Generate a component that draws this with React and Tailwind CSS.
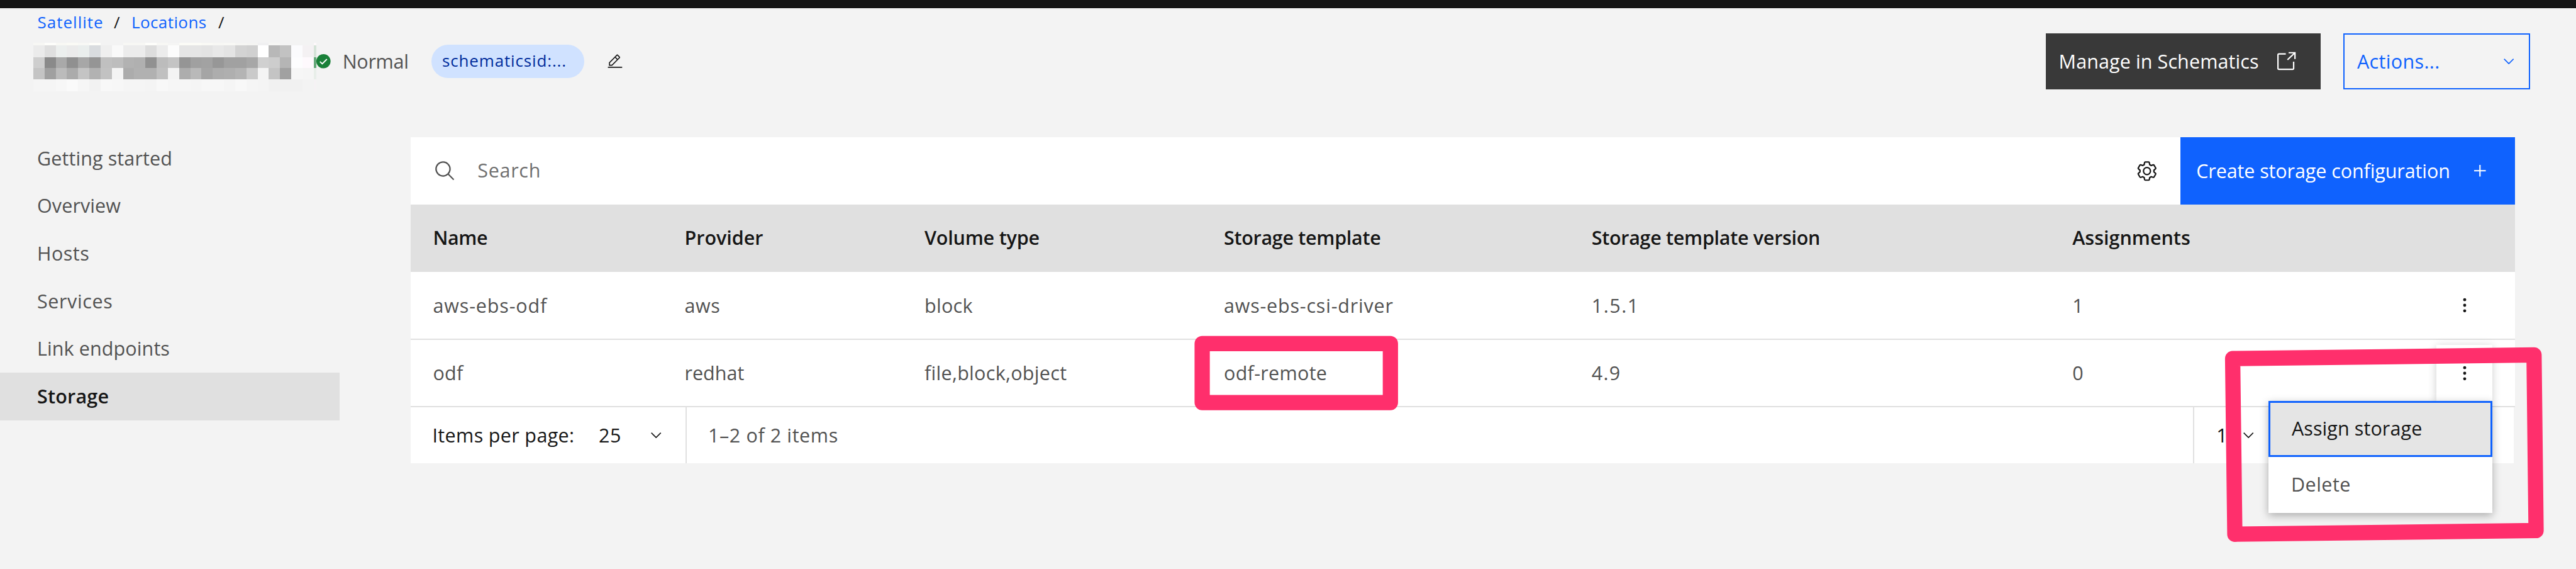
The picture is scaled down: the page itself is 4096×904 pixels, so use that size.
const REDACTED_ROWS = [
  { y: 0, h: 5.3, c: "f7f7f4 fdfdfa f8f8f4 fafaf5 f8f8f5 fdfdf9 f3f3f3 f3f3f3 f7f7f4 f7f7f4 fdfdfa f7f7f4 f5f5f4 fbfbf6 fbfbf6 f9f9f5 f7f7f4 f8f8f5 f5f5f3 f4f4f2 f0f0f1 f6f6f4 f3f3f3 f3f3f3 f3f3f3 fdf8fa" },
  { y: 5.3, h: 22.7, c: "ebebeb dfdfdf ecefee ebebeb eaeeed d9dcdf efefef f9f9f9 ececec ececec dddddd ececec fcfcfc e5e5e5 e5e5e5 e3e3e3 e8e8e8 e4e4e4 d3d3d3 d0d0d0 ffffff b8b8b8 c2c2c2 fbfbfd f4f1f3 d5e3d8" },
  { y: 28, h: 22, c: "cecece 8a8a8a a9a9a9 909090 a7a7a7 959595 c0c0c0 bdbdbd b2b2b2 b0b0b0 919191 bcbcbc c4c4c4 959595 a0a0a0 a2a2a2 979797 a1a1a1 a1a1a1 a7a7a7 d0d0d0 cdcdcd b5b5b5 fdfdfe fef9fd 66a87a" },
  { y: 50, h: 22.3, c: "c4c4c4 a0a0a0 bbbbbb ababab c4c4c4 b2b2b2 c2c2c2 f4f4f4 acacac b1b1b1 b1b1b1 c0c0c0 f3f3f3 adadad b9b9b9 a5a5a5 adadad afafaf b4b4b4 cacaca f4f4f4 c4c4c4 a1a1a1 f6f6f6 f5f5f5 e8eee9" },
  { y: 72.3, h: 22.7, c: "f5f5f5 f5f5f5 f7f7f7 fafafa f6f6f6 f2f2f2 f8f8f8 f7f7f7 f5f5f5 f5f5f5 f4f4f4 f8f8f8 f6f6f6 f6f6f6 f5f5f5 f7f7f7 f7f7f7 f5f5f5 f8f8f8 f5f5f5 f4f4f4 f1f1f1 f1f1f1 f1f1f1 f3f3f3 f5f2f4" },
];

function RedactedName() {
  return (
    <svg className="ml-[53.4px] mt-[15px] h-[76.8px] w-[449.7px] shrink-0 self-start" viewBox="0 0 556 95" preserveAspectRatio="none" shapeRendering="crispEdges">
      {REDACTED_ROWS.map((row) =>
        row.c.split(" ").map((color, i) => (
          <rect key={i} x={i * 22.04} y={row.y} width={i === 25 ? 5 : 22.04} height={row.h} fill={"#" + color} />
        ))
      )}
    </svg>
  );
}

function CheckIcon() {
  return (
    <svg className="size-[22.6px] shrink-0" viewBox="0 0 28 28" fill="none">
      <circle cx="14" cy="14" r="14" fill="#198038" />
      <path d="M7.2 14.8l4.4 4.3 9.2-9.2" stroke="#fff" strokeWidth="2.3" />
    </svg>
  );
}

function EditIcon() {
  return (
    <svg className="ml-[35.6px] size-[25.9px] shrink-0" viewBox="0 0 32 32" fill="#161616">
      <path d="M2 26H30V28H2zM25.4 9c.8-.8.8-2 0-2.8l-3.6-3.6c-.8-.8-2-.8-2.8 0l-15 15V24h6.4L25.4 9zM20.4 4L24 7.6l-3 3L17.4 7 20.4 4zM6 22v-3.6l10-10 3.6 3.6-10 10H6z" />
    </svg>
  );
}

function LaunchIcon() {
  return (
    <svg className="size-[32.4px] shrink-0" viewBox="16 10 40 40" fill="none" stroke="#fff" strokeWidth="2.7">
      <path d="M34 15.7H20.6a2 2 0 0 0-2 2V44a2 2 0 0 0 2 2h26.8a2 2 0 0 0 2-2V31" />
      <path d="M39.5 13.4H52V25.8M52 13.4L37.3 27.3" />
    </svg>
  );
}

function Chevron({ className }) {
  return (
    <svg className={"h-[9.4px] w-[16.4px] shrink-0 " + className} viewBox="0 0 20.2 11.6" fill="none" stroke="currentColor" strokeWidth="2">
      <path d="M.8.8l9.3 9.3L19.4.8" />
    </svg>
  );
}

function SearchIcon() {
  return (
    <svg className="size-[35.6px] shrink-0" viewBox="0 0 32 32" fill="#525252">
      <path d="M29 27.586l-7.552-7.552a11.018 11.018 0 1 0-1.414 1.414L27.586 29ZM4 13a9 9 0 1 1 9 9A9.01 9.01 0 0 1 4 13Z" />
    </svg>
  );
}

function GearIcon() {
  return (
    <svg className="size-[35.6px] shrink-0" viewBox="0 0 32 32" fill="#161616">
      <path d="M27,16.76c0-.25,0-.5,0-.76s0-.51,0-.77l1.92-1.68A2,2,0,0,0,29.3,11L26.94,7a2,2,0,0,0-1.73-1,2,2,0,0,0-.64.1l-2.43.82a11.35,11.35,0,0,0-1.31-.75l-.51-2.52a2,2,0,0,0-2-1.61H13.64a2,2,0,0,0-2,1.61l-.51,2.52a11.48,11.48,0,0,0-1.32.75L7.43,6.06A2,2,0,0,0,6.79,6,2,2,0,0,0,5.06,7L2.7,11a2,2,0,0,0,.41,2.51L5,15.24c0,.25,0,.5,0,.76s0,.51,0,.77L3.11,18.45A2,2,0,0,0,2.7,21L5.06,25a2,2,0,0,0,1.73,1,2,2,0,0,0,.64-.1l2.43-.82a11.35,11.35,0,0,0,1.31.75l.51,2.52a2,2,0,0,0,2,1.61h4.72a2,2,0,0,0,2-1.61l.51-2.52a11.48,11.48,0,0,0,1.32-.75l2.42.82a2,2,0,0,0,.64.1,2,2,0,0,0,1.73-1L29.3,21a2,2,0,0,0-.41-2.51ZM25.21,24l-3.43-1.16a8.86,8.86,0,0,1-2.71,1.57L18.36,28H13.64l-.71-3.55a9.36,9.36,0,0,1-2.7-1.57L6.79,24,4.43,20l2.72-2.4a8.9,8.9,0,0,1,0-3.13L4.43,12,6.79,8l3.43,1.16a8.86,8.86,0,0,1,2.71-1.57L13.64,4h4.72l.71,3.55a9.36,9.36,0,0,1,2.7,1.57L25.21,8,27.57,12l-2.72,2.4a8.9,8.9,0,0,1,0,3.13L27.57,20Z" />
      <path d="M16,22a6,6,0,1,1,6-6A5.94,5.94,0,0,1,16,22Zm0-10a3.91,3.91,0,0,0-4,4,3.91,3.91,0,0,0,4,4,3.91,3.91,0,0,0,4-4A3.91,3.91,0,0,0,16,12Z" />
    </svg>
  );
}

function PlusIcon() {
  return (
    <svg className="size-[18.6px] shrink-0" viewBox="0 0 23 23" stroke="#fff" strokeWidth="2.6">
      <path d="M11.5 0V23M0 11.5H23" />
    </svg>
  );
}

function KebabIcon() {
  return (
    <svg className="h-[24px] w-[8px]" viewBox="0 0 10 30" fill="#161616">
      <circle cx="5" cy="4" r="3" />
      <circle cx="5" cy="15" r="3" />
      <circle cx="5" cy="26" r="3" />
    </svg>
  );
}

const NAV = [
  ["Getting started", "tracking-[0.1px]"],
  ["Overview", "tracking-[0.1px]"],
  ["Hosts", "tracking-[0.5px]"],
  ["Services", "tracking-[0.6px]"],
  ["Link endpoints", "tracking-[0.1px]"],
  ["Storage", "tracking-[0.2px]"],
];

const COLUMNS = [
  ["Name", "tracking-[-0.4px]"],
  ["Provider", "tracking-normal"],
  ["Volume type", "tracking-[-0.2px]"],
  ["Storage template", "tracking-[-0.3px]"],
  ["Storage template version", "tracking-[-0.3px]"],
  ["Assignments", "tracking-normal"],
];

const ROWS = [
  [
    ["aws-ebs-odf", "tracking-[0.85px]"],
    ["aws", "tracking-[0.6px]"],
    ["block", "tracking-[0.3px]"],
    ["aws-ebs-csi-driver", "tracking-[0.8px]"],
    ["1.5.1", "tracking-[1.5px]"],
    ["1", "tracking-normal"],
  ],
  [
    ["odf", "tracking-[0.2px]"],
    ["redhat", "tracking-normal"],
    ["file,block,object", "tracking-[0.3px]"],
    ["odf-remote", "tracking-[0.3px]"],
    ["4.9", "tracking-[1.2px]"],
    ["0", "tracking-normal"],
  ],
];

const GRID = "grid grid-cols-[400px_381.5px_476px_584.8px_764.4px_1fr] items-center";

function Header() {
  return (
    <header>
      <nav className="mt-[4px] flex h-[36px] items-center pl-[59.5px] text-[26px] leading-[36px] text-[#0f62fe]">
        <a className="w-[121.5px] tracking-[1px]">Satellite</a>
        <span className="w-[28px] text-[#161616]">/</span>
        <a className="w-[138px] tracking-[0.4px]">Locations</a>
        <span className="text-[#161616]">/</span>
      </nav>
      <div className="flex h-[89px] items-center">
        <RedactedName />
        <CheckIcon />
        <span className="w-[160.3px] pb-[2px] pl-[19px] tracking-[-0.3px]">Normal</span>
        <span className="flex h-[53.4px] w-[243.5px] items-center rounded-full bg-[#d0e2ff] pb-[3px] pl-[17px] text-[26px] tracking-[0.85px] text-[#002d9c]">
          schematicsid:...
        </span>
        <EditIcon />
        <button className="ml-auto flex h-[89px] w-[436.8px] items-center bg-[#393939] pl-[20.5px] text-white">
          <span className="w-[346.7px] pb-[2px] text-left tracking-[0.1px]">Manage in Schematics</span>
          <LaunchIcon />
        </button>
        <button className="ml-[36px] mr-[72.8px] flex h-[89px] w-[297.3px] items-center justify-between border-2 border-[#0f62fe] pl-[20px] pr-[24px] text-[#0f62fe]">
          <span className="pb-[2px] tracking-[0.35px]">Actions...</span>
          <Chevron />
        </button>
      </div>
    </header>
  );
}

function Sidebar() {
  return (
    <aside className="mt-[72px] w-[540.3px] shrink-0">
      {NAV.map(([label, tracking]) => (
        <div
          key={label}
          className={
            "flex h-[75.6px] items-center pb-[2px] pl-[59px] " + tracking + (label === "Storage" ? " bg-[#e0e0e0] font-semibold text-[#161616]" : "")
          }
        >
          {label}
        </div>
      ))}
    </aside>
  );
}

function OverflowMenu() {
  return (
    <ul className="absolute right-0 top-full w-[356px] bg-white shadow-[0_4px_13px_rgba(0,0,0,0.3)]">
      <li className="flex h-[89px] items-center border-[3px] border-[#0f62fe] bg-[#e5e5e5] pb-[3px] pl-[33.5px] tracking-[0.1px] text-[#161616]">Assign storage</li>
      <li className="flex h-[89px] items-center pb-[3px] pl-[35.5px] tracking-[0.5px]">Delete</li>
    </ul>
  );
}

function Table() {
  return (
    <main className="ml-[113.2px] mt-[76px] w-[3345.4px] shrink-0">
      <div className="flex h-[107px] items-center bg-white pl-[36.2px]">
        <SearchIcon />
        <span className="pb-[3px] pl-[34px] tracking-[0.7px] text-[#6f6f6f]">Search</span>
        <span className="ml-auto mr-[35.5px] flex">
          <GearIcon />
        </span>
        <button className="flex h-full w-[532.2px] items-center bg-[#0f62fe] pl-[25.5px] text-white">
          <span className="w-[441.9px] pb-[2px] text-left tracking-[-0.1px]">Create storage configuration</span>
          <PlusIcon />
        </button>
      </div>
      <div className={GRID + " h-[107px] bg-[#e0e0e0] font-semibold text-[#161616]"}>
        {COLUMNS.map(([label, tracking]) => (
          <div key={label} className={"pb-[3px] pl-[35px] " + tracking}>
            {label}
          </div>
        ))}
      </div>
      {ROWS.map((cells, r) => (
        <div key={r} className={GRID + " border-b-2 border-[#e0e0e0] bg-white " + (r === 0 ? "h-[108px]" : "h-[107px]")}>
          {cells.map(([text, tracking], c) => (
            <div key={c} className={"flex items-center pl-[35px] " + tracking}>
              <span className="pb-[1px]">{text}</span>
              {c === 5 && (
                <div
                  className={
                    "relative ml-auto mr-[35.5px] flex size-[89px] items-center justify-center " +
                    (r === 1 ? "bg-white shadow-[0_2px_13px_rgba(0,0,0,0.2)]" : "")
                  }
                >
                  <KebabIcon />
                  {r === 1 && <OverflowMenu />}
                </div>
              )}
            </div>
          ))}
        </div>
      ))}
      <div className="flex h-[89px] w-[3343.8px] items-center bg-white text-[#161616]">
        <div className="flex h-full w-[438.5px] items-center border-r-2 border-[#e0e0e0] pl-[34px]">
          <span className="w-[264.6px] pb-[2px] tracking-[0.35px]">Items per page:</span>
          <span className="w-[83.2px] pb-[2px] tracking-[0.6px]">25</span>
          <Chevron />
        </div>
        <span className="pb-[2px] pl-[34px] tracking-[0.6px] text-[#525252]">1–2 of 2 items</span>
        <div className="ml-auto flex h-full w-[510.5px] items-center border-l-2 border-[#e0e0e0] pl-[35.5px]">
          <span className="w-[43px] pb-[2px]">1</span>
          <Chevron />
        </div>
      </div>
    </main>
  );
}

function Highlights() {
  return (
    <svg className="pointer-events-none absolute inset-0 h-full w-full" viewBox="0 0 5064 1118" preserveAspectRatio="none" fill="none" stroke="#ff2f6c" strokeWidth="30" strokeLinejoin="round">
      <path d="M2363.3 675H2733.3V791H2363.3Z" />
      <path d="M4389 704.5L4981.5 697.5L4985.5 1042.5L4393.3 1049.7Z" />
    </svg>
  );
}

export default function App() {
  return (
    <div className="relative h-[904px] w-full overflow-hidden bg-[#f3f3f3] font-['Open_Sans',sans-serif] text-[30.5px] leading-[42px] text-[#525252]">
      <div className="h-[13px] bg-[#161616]" />
      <Header />
      <div className="flex">
        <Sidebar />
        <Table />
      </div>
      <Highlights />
    </div>
  );
}
